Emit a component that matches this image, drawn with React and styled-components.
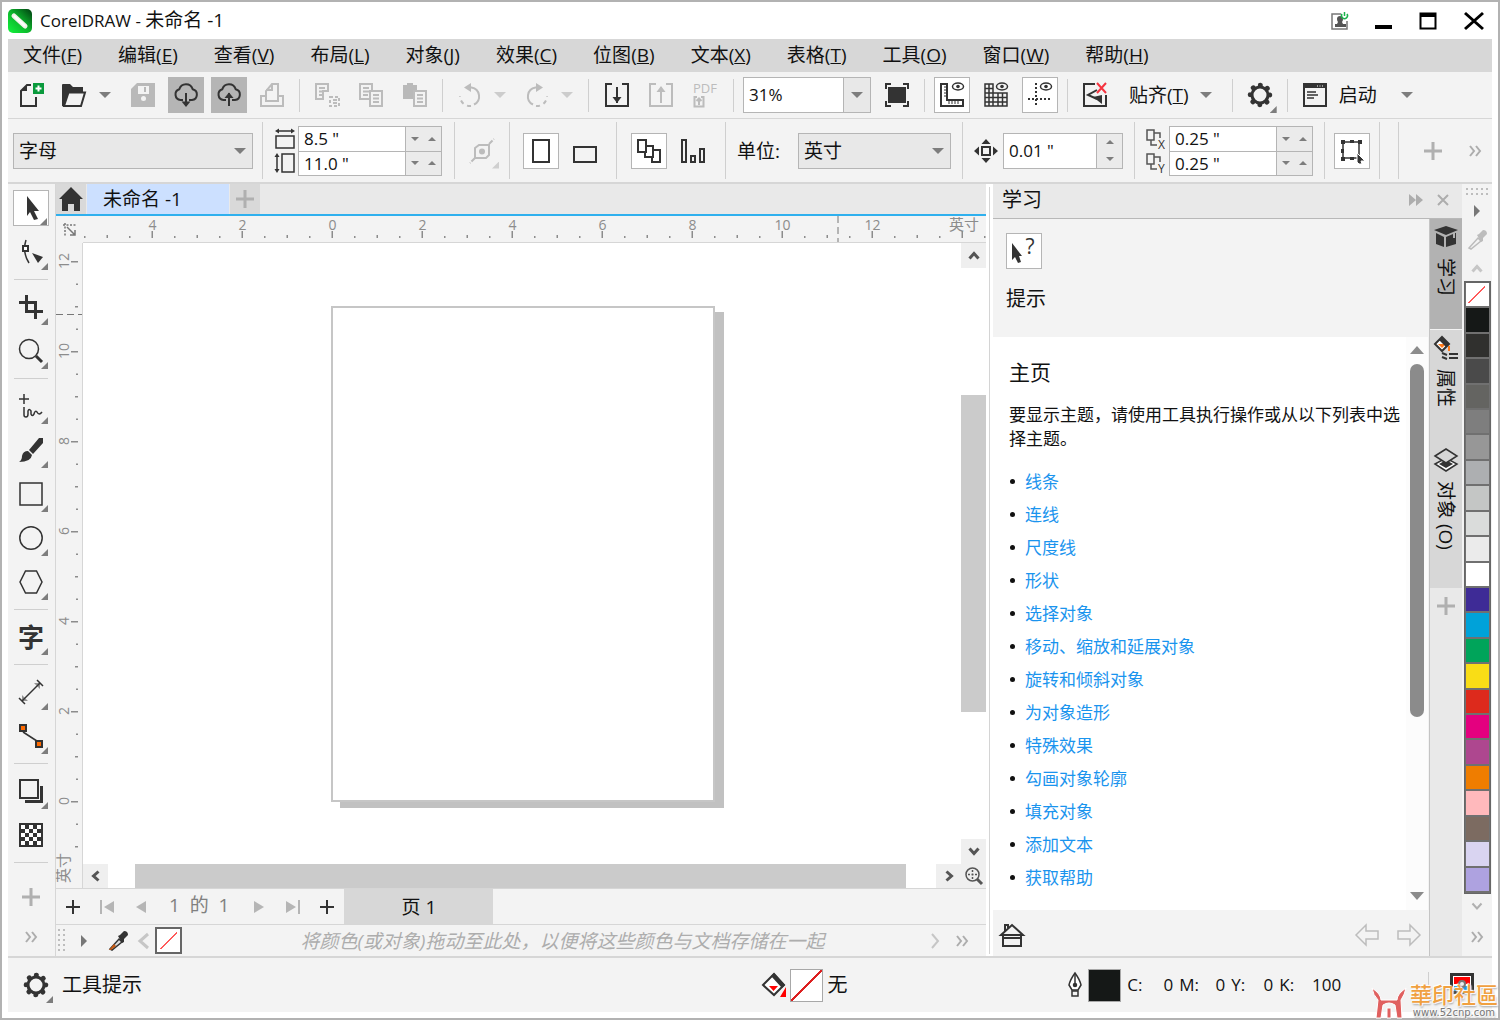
import React from "react";
import styled, { createGlobalStyle, css } from "styled-components";

const INK = "#333";
const FADED = "#bcbcbc";
const LINE = "#d6d6d6";
const PANEL = "#f3f3f3";

const GlobalStyle = createGlobalStyle`
  *, *::before, *::after { box-sizing: border-box; }
  body { margin: 0; background: #fff; }
  body, button, input, select {
    font-family: "Open Sans", "Noto Sans CJK SC", sans-serif;
    font-size: 19px;
    color: #111;
  }
  button { border: 0; padding: 0; margin: 0; background: none; }
  svg { display: block; flex: none; overflow: visible; }
`;

/* ---------- window shell ---------- */

const Window = styled.div`
  display: flex;
  flex-direction: column;
  min-height: 100vh;
  min-width: 1500px;
  padding: 0 6px 6px;
  border: 2px solid #b2b2b2;
  background: #fff;
`;

const TitleBar = styled.header`
  display: flex;
  align-items: center;
  justify-content: space-between;
  height: 37px;
`;

const Title = styled.h1`
  display: flex;
  align-items: center;
  gap: 8px;
  margin: 0;
  font-size: 19px;
  line-height: 24px;
  font-weight: 400;
`;

const Latin = styled.span`
  font-size: 17px;
`;

const WindowButtons = styled.div`
  display: flex;
  align-items: center;
  gap: 25px;
  padding-right: 8px;
`;

const MenuBar = styled.nav`
  display: flex;
  align-items: center;
  gap: 36px;
  height: 33px;
  padding: 0 15px 2px;
  background: #d7d7d7;
`;

const MenuItem = styled.button`
  line-height: 24px;
  white-space: nowrap;
`;

/* ---------- toolbars ---------- */

const Toolbar = styled.div`
  display: flex;
  align-items: center;
  height: ${(p) => p.$height}px;
  padding-left: 5px;
  background: ${PANEL};
  border-bottom: ${(p) => p.$rule}px solid ${LINE};
`;

const Divider = styled.span`
  flex: none;
  width: 1px;
  height: ${(p) => p.$height}px;
  margin: 0 9px;
  background: #cfcfcf;
`;

const Group = styled.div`
  display: flex;
  align-items: center;
  flex: none;
  gap: ${(p) => p.$gap ?? 8}px;
  padding: 0 ${(p) => p.$inset || 0}px;
`;

const Split = styled.div`
  display: flex;
  align-items: center;
`;

const IconButton = styled.button`
  position: relative;
  display: flex;
  align-items: center;
  justify-content: center;
  flex: none;
  width: 36px;
  height: 36px;
  ${(p) => p.$on && css`background: #fff; border: 1px solid #b5b5b5;`}
  ${(p) => p.$pressed && css`background: #b5b5b5;`}
`;

const DropButton = styled.button`
  display: flex;
  align-items: center;
  justify-content: center;
  width: ${(p) => p.$width || 24}px;
  height: 36px;
`;

const TextButton = styled.button`
  display: flex;
  align-items: center;
  line-height: 24px;
  white-space: nowrap;
`;

const Corner = styled.span`
  position: absolute;
  right: 1px;
  bottom: 0;
  width: 7px;
  height: 7px;
  background: ${(p) => (p.$faded ? "#cfcfcf" : "#7d7d7d")};
  clip-path: polygon(100% 0, 100% 100%, 0 100%);
`;

const Picker = styled.span`
  position: relative;
  display: flex;
  flex: none;
  width: ${(p) => p.$width}px;
  height: 36px;
  border: 1px solid #b5b5b5;
  background: ${(p) => (p.$editable ? "#fff" : "#e8e8e8")};
  select {
    flex: 1;
    width: 100%;
    appearance: none;
    border: 0;
    padding: 0 5px;
    background: transparent;
    line-height: 32px;
    font-size: ${(p) => (p.$editable ? 17 : 19)}px;
  }
`;

const PickerArrow = styled.span`
  position: absolute;
  inset: 0 0 0 auto;
  display: flex;
  align-items: center;
  justify-content: center;
  width: ${(p) => (p.$editable ? 27 : 24)}px;
  pointer-events: none;
  ${(p) => p.$editable && css`background: #e8e8e8; border-left: 1px solid #b5b5b5;`}
`;

const FieldStack = styled.div`
  display: flex;
  flex-direction: column;
  border: 1px solid #b5b5b5;
`;

const Field = styled.div`
  display: flex;
  width: ${(p) => p.$width}px;
  height: ${(p) => p.$height}px;
  background: #fff;
  & + & { border-top: 1px solid #b5b5b5; }
  input {
    flex: 1;
    min-width: 0;
    border: 0;
    padding: 0 5px;
    background: transparent;
    font-size: 17px;
  }
`;

const Steppers = styled.span`
  display: flex;
  flex-direction: ${(p) => (p.$vertical ? "column" : "row")};
  align-items: center;
  justify-content: space-around;
  width: ${(p) => (p.$vertical ? 26 : 36)}px;
  background: #ebebeb;
  border-left: 1px solid #b5b5b5;
`;

const IconStack = styled.div`
  display: grid;
  gap: 4px;
`;

const UnitLabel = styled.label`
  display: flex;
  align-items: center;
  gap: 18px;
  line-height: 24px;
  white-space: nowrap;
`;

const Filler = styled.span`
  flex: 1;
`;

/* ---------- workspace ---------- */

const Workspace = styled.main`
  display: grid;
  grid-template-columns: 48px minmax(0, 1fr) 7px 469px 30px;
  flex: 1;
  min-height: 0;
`;

const Toolbox = styled.div`
  display: flex;
  flex-direction: column;
  align-items: center;
  gap: 8px;
  padding: 6px 1px 0 0;
  background: ${PANEL};
  border-right: 1px solid ${LINE};
`;

const ToolRule = styled.span`
  width: 34px;
  height: 1px;
  margin: 1px 0;
  background: #cfcfcf;
`;

const ToolboxTail = styled.div`
  display: grid;
  gap: 4px;
  padding-top: 7px;
`;

const DocumentArea = styled.section`
  display: flex;
  flex-direction: column;
  min-width: 0;
`;

const TabStrip = styled.div`
  display: flex;
  gap: 1px;
  height: 32px;
  background: #e9e9e9;
  border-bottom: 2px solid #2fb0ee;
`;

const StripButton = styled.button`
  display: flex;
  align-items: center;
  justify-content: center;
  width: 30px;
  background: #d9d9d9;
`;

const DocTab = styled.button`
  width: 142px;
  padding-left: 16px;
  text-align: left;
  line-height: 28px;
  background: #cce0ff;
`;

const Stage = styled.div`
  display: grid;
  grid-template-columns: 27px minmax(0, 1fr) 25px;
  grid-template-rows: 27px minmax(0, 1fr) 24px;
  flex: 1;
`;

const RulerCorner = styled.button`
  display: flex;
  align-items: center;
  justify-content: center;
  background: ${PANEL};
`;

const TopRuler = styled.div`
  grid-column: 2 / 4;
  min-width: 0;
  background: ${PANEL};
  border-bottom: 1px solid ${LINE};
`;

const SideRuler = styled.div`
  grid-row: 2 / 4;
  display: flex;
  flex-direction: column;
  justify-content: space-between;
  min-height: 0;
  background: ${PANEL};
  border-right: 1px solid ${LINE};
`;

const Canvas = styled.div`
  position: relative;
  overflow: hidden;
  background: #fff;
`;

const Page = styled.div`
  position: absolute;
  left: 248px;
  top: 63px;
  width: 384px;
  height: 496px;
  background: #fff;
  border: 2px solid #c6c6c6;
  box-shadow: 9px 6px 0 #c1c1c1;
`;

const Scroller = styled.div`
  display: flex;
  flex-direction: ${(p) => (p.$vertical ? "column" : "row")};
  background: #fff;
`;

const ScrollButton = styled.button`
  display: flex;
  align-items: center;
  justify-content: center;
  flex: 0 0 25px;
  min-height: 24px;
  background: #efefef;
`;

const Track = styled.span`
  flex: ${(p) => p.$share};
`;

const Thumb = styled.span`
  flex: ${(p) => p.$share};
  background: #cbcbcb;
`;

const PageBar = styled.div`
  display: flex;
  height: 36px;
  background: ${PANEL};
  border-top: 1px solid ${LINE};
`;

const PageBarButton = styled.button`
  display: flex;
  align-items: center;
  justify-content: center;
  width: 34px;
`;

const PageCount = styled.span`
  padding: 0 13px 0 11px;
  color: #808080;
  line-height: 32px;
  white-space: pre;
`;

const PageTab = styled.button`
  width: 149px;
  background: #d7d7d7;
  line-height: 32px;
`;

const DocPalette = styled.div`
  display: flex;
  align-items: center;
  height: 32px;
  padding: 0 18px 0 2px;
  background: ${PANEL};
  border-top: 1px solid ${LINE};
`;

const Grip = styled.span`
  width: ${(p) => p.$width}px;
  height: ${(p) => p.$height}px;
  background: radial-gradient(circle at 1px 1px, #bdbdbd 1px, transparent 1px) 0 0 / 5px 5px;
`;

const PaletteHint = styled.em`
  flex: 1;
  padding-left: 14px;
  color: #adadad;
  text-align: center;
  line-height: 28px;
  white-space: nowrap;
`;

const NoColor = styled.button`
  width: 27px;
  height: 27px;
  background: linear-gradient(to top left, transparent 48%, #ff5a5a 48%, #ff5a5a 52%, transparent 52%) center / 76% 76% no-repeat #fff;
  border: 2px solid #666;
`;

const Seam = styled.span`
  margin: 3px 3px 2px;
  background: #d4d4d4;
`;

/* ---------- learn docker ---------- */

const Docker = styled.aside`
  display: flex;
  flex-direction: column;
  min-width: 0;
`;

const DockerHeader = styled.div`
  display: flex;
  align-items: center;
  gap: 14px;
  height: 35px;
  padding: 0 13px 2px 9px;
  background: #e9e9e9;
  border-bottom: 1px solid #b8b8b8;
  h2 {
    flex: 1;
    margin: 0;
    font-size: 20px;
    font-weight: 400;
    line-height: 28px;
  }
`;

const DockerBody = styled.div`
  display: grid;
  grid-template-columns: minmax(0, 1fr) 32px;
  flex: 1;
`;

const DockerPage = styled.div`
  display: flex;
  flex-direction: column;
  background: ${PANEL};
  border-right: 1px solid #c4c4c4;
`;

const Hints = styled.div`
  display: flex;
  flex-direction: column;
  gap: 16px;
  height: 118px;
  padding: 14px 13px 0;
  span { font-size: 20px; line-height: 28px; }
`;

const Reader = styled.div`
  display: flex;
  flex: 1;
  margin-right: 1px;
  background: #fff;
`;

const Article = styled.article`
  flex: 1;
  padding: 20px 0 0 16px;
  font-size: 17px;
  line-height: 24px;
  h3 {
    margin: 0 0 16px;
    font-size: 21px;
    font-weight: 400;
    line-height: 30px;
  }
  p { margin: 0 0 14px; }
`;

const Topics = styled.ul`
  margin: 0;
  padding: 0;
  list-style: none;
  li {
    display: flex;
    align-items: center;
    gap: 10px;
    height: 33px;
    padding-left: 1px;
  }
  li::before {
    content: "";
    width: 5px;
    height: 5px;
    border-radius: 50%;
    background: #111;
  }
  a { color: #1a94ee; font-size: 17px; text-decoration: none; }
`;

const ReaderScroll = styled.div`
  display: flex;
  flex-direction: column;
  align-items: center;
  gap: 10px;
  width: 22px;
  padding: 9px 0 10px;
  background: #fcfcfc;
`;

const ReaderThumb = styled.span`
  flex: 360;
  width: 14px;
  border-radius: 7px;
  background: #8b8b8b;
`;

const DockerFooter = styled.div`
  display: flex;
  align-items: center;
  gap: 18px;
  height: 46px;
  padding: 4px 8px 0 7px;
`;

const SideTabs = styled.div`
  display: flex;
  flex-direction: column;
  background: #e9e9e9;
`;

const SideTab = styled.button`
  display: flex;
  flex-direction: column;
  align-items: center;
  gap: 9px;
  min-height: ${(p) => p.$height}px;
  padding-top: 6px;
  background: ${(p) => (p.$active ? "#b2b2b2" : "#d7d7d7")};
  border-bottom: ${(p) => (p.$active ? "1px solid #f3f3f3" : "0")};
  span {
    writing-mode: vertical-rl;
    text-orientation: sideways;
    line-height: 24px;
    white-space: nowrap;
  }
`;

const AddTab = styled.button`
  display: flex;
  justify-content: center;
  padding-top: 9px;
`;

const PaletteColumn = styled.div`
  display: flex;
  flex-direction: column;
  align-items: center;
  background: ${PANEL};
`;

const PaletteButton = styled.button`
  display: flex;
  align-items: center;
  justify-content: center;
  width: 30px;
  height: ${(p) => p.$height}px;
`;

const Swatches = styled.div`
  display: grid;
  grid-auto-rows: 1fr;
  flex: 1;
  width: 27px;
  border: 1px solid #666;
  border-top-width: 2px;
`;

const Swatch = styled.button`
  background: ${(p) => p.$color};
  border: solid #707070;
  border-width: 0 1px 2px 1px;
`;

/* ---------- status bar ---------- */

const StatusBar = styled.footer`
  position: relative;
  display: grid;
  grid-template-columns: 50fr 20fr 29fr;
  align-items: center;
  height: 56px;
  background: ${PANEL};
  border-top: 2px solid ${LINE};
`;

const StatusPart = styled.div`
  display: flex;
  align-items: center;
  gap: ${(p) => p.$gap}px;
  padding-left: ${(p) => p.$indent || 0}px;
  font-size: 20px;
  line-height: 28px;
`;

const ColorChip = styled.button`
  width: 33px;
  height: 33px;
  border: 1px solid #a8a8a8;
  background: ${(p) => p.$fill};
`;

const Ink = styled.span`
  display: flex;
  justify-content: space-between;
  width: ${(p) => p.$width}px;
  font-size: 17px;
`;

const Watermark = styled.div`
  position: absolute;
  right: -6px;
  bottom: -7px;
  display: flex;
  align-items: flex-end;
  gap: 4px;
`;

const WatermarkText = styled.div`
  display: grid;
  justify-items: center;
  text-shadow: 0 0 2px #fff, 1px 1px 1px #fff, -1px -1px 1px #fff, 1px 2px 2px #999;
  strong {
    color: #f0a040;
    font: 500 22px/26px "Open Sans", "Noto Sans CJK TC", sans-serif;
  }
  small {
    color: #777;
    font: 10px/12px "DejaVu Sans", sans-serif;
  }
`;

/* ---------- drawings ---------- */

const Icon = ({ w = 24, h = 24, c = INK, sw = 2, fill = "none", children, ...rest }) => (
  <svg width={w} height={h} viewBox={`0 0 ${w} ${h}`} fill={fill} stroke={c} strokeWidth={sw} aria-hidden="true" {...rest}>
    {children}
  </svg>
);

const Caret = ({ c = "#7d7d7d", up, big }) => {
  const w = big ? 12 : 8;
  const h = big ? 6 : 4;
  return (
    <Icon w={w} h={h} sw={0} fill={c}>
      <path d={up ? `M0 ${h}h${w}L${w / 2} 0z` : `M0 0h${w}L${w / 2} ${h}z`} />
    </Icon>
  );
};

const Plus = ({ c = "#b0b0b0", size = 18, sw = 3 }) => (
  <Icon w={size} h={size} c={c} sw={sw}>
    <path d={`M${size / 2} 0v${size}M0 ${size / 2}h${size}`} />
  </Icon>
);

const Chevrons = ({ c = "#adadad" }) => (
  <Icon w={12} h={12} c={c} sw={2}><path d="M1 1l4 5-4 5M7 1l4 5-4 5" /></Icon>
);

const Chevron = ({ turn = 0, c = "#555", sw = 3 }) => (
  <Icon w={12} h={12} c={c} sw={sw}>
    <path d="M1.500 8.500L6 3.500l4.500 5" transform={`rotate(${turn} 6 6)`} />
  </Icon>
);

const NewIcon = () => (
  <Icon>
    <path d="M12 2H8L2 8v15h15V14" /><path d="M8 2v6H2z" fill={INK} stroke="none" />
    <path d="M14 0h11v11H14z" fill="#0a9a3c" stroke="none" />
    <path d="M19.500 2.500v6M16.500 5.500h6" stroke="#fff" />
  </Icon>
);
const OpenIcon = () => (
  <Icon>
    <path d="M0 2q0-1 1-1h7l3 3h10v6H6L2 23H0z" fill={INK} stroke="none" />
    <path d="M6.500 9.500H23L19 23H2z" fill={PANEL} />
  </Icon>
);
const SaveIcon = () => (
  <Icon c="none" fill="#b9b9b9">
    <path d="M6 0h18v24H0V6z" /><path d="M7 3h11v8H7z" fill={PANEL} /><path d="M13 4h2v5h-2z" />
    <circle cx="12.500" cy="15.500" r="2.500" fill={PANEL} />
  </Icon>
);
const CloudIcon = ({ up }) => (
  <Icon>
    <path d="M9 17H6.500A5.500 5.500 0 0 1 5.300 6.300 7 7 0 0 1 18.700 6.200 5.500 5.500 0 0 1 18 17h-3" />
    <path d="M12 10v13" />
    <path d={up ? "M7.500 15L12 9.500l4.500 5.500z" : "M7.500 18.500L12 24l4.500-5.500z"} fill={INK} stroke="none" />
  </Icon>
);
const PrintIcon = () => (
  <Icon c={FADED}><path d="M5 13H1v10h22V13h-4M6 18V8l6-7h6v17zM12 1v6H6" /></Icon>
);
const CutIcon = () => (
  <Icon c={FADED}>
    <path d="M1 1h12v7H8v8H1zM4 5h6M4 8.500h4M4 12h4" /><path d="M15 14h9v9h-9z" strokeDasharray="3 2" /><path d="M18 17h4M18 20h4" />
  </Icon>
);
const CopyIcon = () => (
  <Icon c={FADED}>
    <path d="M11 16H1V1h12v7M4 5h6M4 8.500h6M4 12h5M11 8h12v15H11zM14 12h6M14 15.500h6M14 19h6" />
  </Icon>
);
const PasteIcon = () => (
  <Icon c={FADED}>
    <path d="M0 2h4V0h6v2h4v6h-4v8H0z" fill="#b9b9b9" stroke="none" />
    <path d="M11 8h12v15H11zM14 12h6M14 15.500h6M14 19h6" />
  </Icon>
);
const UndoIcon = ({ flip }) => (
  <Icon c={FADED}>
    <g transform={flip ? "matrix(-1 0 0 1 24 0)" : undefined}>
      <path d="M10 4.500h3.500a9 9 0 0 1 2.500 17" /><path d="M13 23a10 10 0 0 1-11-10" strokeDasharray="4 4" />
      <path d="M6 4.500L13 0v9z" fill={FADED} stroke="none" />
    </g>
  </Icon>
);
const ImportIcon = ({ up }) => (
  <Icon c={up ? FADED : INK}>
    <path d="M7 1H1v22h22V1h-6M12 4v16" />
    <path d={up ? "M7.500 9L12 3l4.500 6z" : "M7.500 14L12 20l4.500-6z"} fill={up ? FADED : INK} stroke="none" />
  </Icon>
);
const PdfIcon = () => (
  <Icon c={FADED} sw={1}>
    <text x="12" y="10" textAnchor="middle" fontSize="13" fill={FADED} stroke="none">PDF</text>
    <path d="M4 14H1.500v9.500h9V14H8M6 22v-6M3.500 18L6 15.500 8.500 18" strokeWidth="2" />
  </Icon>
);
const FullIcon = () => (
  <Icon>
    <path d="M3 4h18v16H3z" fill={INK} stroke="none" /><path d="M1 6V1h5M18 1h5v5M23 18v5h-5M6 23H1v-5" />
  </Icon>
);
const Eye = ({ x, y }) => (
  <g transform={`translate(${x} ${y})`}>
    <ellipse cx="6" cy="3.500" rx="5.500" ry="3.500" strokeWidth="1.500" /><circle cx="6" cy="3.500" r="1.800" fill={INK} stroke="none" />
  </g>
);
const RulersIcon = () => (
  <Icon sw={2}>
    <path d="M1 1h6v16h16v6H1z" />
    <path d="M4 4h3M4 7h3M4 10h3M4 13h3M9 17v4M12 17v4M15 17v4M18 17v4" strokeWidth="1" /><Eye x={12} y={0} />
  </Icon>
);
const GridIcon = () => (
  <Icon sw={1.500}>
    <path d="M1 1h8v9h14v13H1zM5 1v22M9 9v14M14 10v13M18.500 10v13M1 5.500h8M1 10h9M1 14.500h22M1 19h22" /><Eye x={12} y={0} />
  </Icon>
);
const GuidesIcon = () => (
  <Icon sw={2}><path d="M8 0v24M0 16h24" strokeDasharray="2 2" /><Eye x={12} y={0} /></Icon>
);
const SnapOffIcon = () => (
  <Icon>
    <path d="M12 1H1v22h22V12" /><path d="M14 7L5 12l9 4" /><path d="M10 14l9-2v9z" fill={INK} stroke="none" />
    <path d="M14 0l9 10M23 0l-9 10" stroke="#f5333f" />
  </Icon>
);
const GearIcon = () => (
  <Icon>
    <circle cx="12" cy="12" r="8" strokeWidth="3" />
    <circle cx="12" cy="12" r="9.800" strokeWidth="5" strokeLinecap="round" strokeDasharray="0.100 7.597" />
  </Icon>
);
const LaunchIcon = () => (
  <Icon>
    <path d="M1 1h22v22H1z" /><path d="M1 1h22v4H1z" fill={INK} stroke="none" />
    <path d="M14 3h7" stroke="#fff" strokeWidth="1" strokeDasharray="1 1.500" /><path d="M4 9h9M4 12h11M4 15h7" strokeWidth="1.500" />
  </Icon>
);
const WidthIcon = () => (
  <Icon w={20} h={20}>
    <path d="M1 7h18v12H1z" strokeWidth="1.500" /><path d="M2 2h16" strokeWidth="1.500" /><path d="M0 2l4-2.500v5zM20 2l-4-2.500v5z" fill={INK} stroke="none" />
  </Icon>
);
const HeightIcon = () => (
  <Icon w={20} h={20}>
    <path d="M7 1h12v18H7z" strokeWidth="1.500" /><path d="M2 2v16" strokeWidth="1.500" /><path d="M2 0l-2.500 4h5zM2 20l-2.500-4h5z" fill={INK} stroke="none" />
  </Icon>
);
const DrawableIcon = () => (
  <Icon c={FADED}>
    <path d="M5 9l4-3h10v10l-3 3H5z" /><circle cx="12" cy="12.500" r="3" fill={FADED} stroke="none" />
    <path d="M19 5l5-5M5 19l-5 5" strokeDasharray="5 1.500" />
  </Icon>
);
const PortraitIcon = () => <Icon><path d="M4 1h16v22H4z" /></Icon>;
const LandscapeIcon = () => <Icon><path d="M1 8h22v15H1z" /></Icon>;
const PagesIcon = () => (
  <Icon>
    <path d="M1 1h8v12H1z" /><path d="M9 7h7v11H8v-5" /><path d="M16 11h7v12h-8v-5" />
  </Icon>
);
const PageBarsIcon = () => <Icon><path d="M1 1h4v22H1zM10 17h4v6h-4zM19 10h4v13h-4z" /></Icon>;
const NudgeIcon = () => (
  <Icon>
    <path d="M8 8h8v8H8z" />
    <path d="M12 0l4.500 5h-9zM12 24l4.500-5h-9zM0 12l5-4.500v9zM24 12l-5-4.500v9z" fill={INK} stroke="none" />
  </Icon>
);
const DuplicateIcon = ({ axis }) => (
  <Icon w={20} h={20} c="#555">
    <path d="M1 1h7v10H1zM8 4h6v5M5 11v5h6" strokeWidth="1.500" />
    <text x="12" y="20" fontSize="12" fill="#333" stroke="none">{axis}</text>
  </Icon>
);
const BoundsIcon = () => (
  <Icon>
    <path d="M3 3h16v16H3z" strokeWidth="1.500" />
    <path d="M1 1h4v4H1zM10 1h4v3h-4zM18 1h4v4h-4zM1 10h3v4H1zM1 18h4v4H1zM10 18h4v3h-4z" fill={INK} stroke="none" />
    <path d="M17 14l8 8-4 0 1 3-3 0-2-2z" fill={INK} stroke="#fff" strokeWidth="1" />
  </Icon>
);

const PickIcon = () => <Icon sw={0} fill={INK}><path d="M8 0l12 15h-5l4 8-4 1-4-8-3 4z" /></Icon>;
const ShapeIcon = () => (
  <Icon sw={1.500}>
    <path d="M7 0Q3 12 10 23" /><path d="M4 6h5v5H4z" fill="#fff" strokeWidth="2" /><path d="M13 13l11 4-5 6z" fill={INK} stroke="none" />
  </Icon>
);
const CropIcon = () => <Icon sw={3}><path d="M7.500 0v16.500H24M0 7.500h16.500V24" /></Icon>;
const ZoomIcon = () => <Icon><circle cx="10" cy="10" r="9.500" strokeWidth="1.500" /><path d="M17 17l6 6" strokeWidth="3" /></Icon>;
const FreehandIcon = () => (
  <Icon sw={1.500}><path d="M5 0v10M0 5h10" /><path d="M5 13v8q0 2 2 2t2-3v-3q1-3 3 0v3q1 3 3 0 1-4 3-2 2 4 5 0" /></Icon>
);
const BrushIcon = () => (
  <Icon c="none" fill={INK}><path d="M24 0v5L14 16l-4-4L20 0zM9 13l4 4q-1 7-13 7 3-2 3-6 1-5 6-5z" /></Icon>
);
const RectIcon = () => <Icon><path d="M1 1h22v22H1z" strokeWidth="1.500" /></Icon>;
const EllipseIcon = () => <Icon><circle cx="12" cy="12" r="11.200" strokeWidth="1.500" /></Icon>;
const HexIcon = () => <Icon><path d="M6.500 1h11L23 12l-5.500 11h-11L1 12z" strokeWidth="1.500" /></Icon>;
const TextIcon = () => (
  <Icon c="none" fill={INK}><text x="12" y="22" textAnchor="middle" fontSize="26" fontWeight="700">字</text></Icon>
);
const DimensionIcon = () => (
  <Icon><path d="M3 21L21 3" strokeWidth="1.500" /><path d="M0 18l6 6M18 0l6 6" strokeWidth="1.500" /><path d="M3 21v-6l6 6zM21 3v6l-6-6z" fill={INK} stroke="none" opacity=".5" /></Icon>
);
const ConnectorIcon = () => (
  <Icon sw={2}>
    <path d="M4 8l17 11" strokeWidth="1.500" /><path d="M1 1h6v6H1zM17 17h6v6h-6z" fill="#ff6a00" />
  </Icon>
);
const ShadowIcon = () => <Icon><path d="M1 1h18v18H1z" /><path d="M22.500 7v15.500H6" strokeWidth="3" /></Icon>;
const CheckerIcon = () => (
  <Icon c="none" fill={INK}>
    <path d="M0 0h24v24H0z" />
    {[0, 1, 2, 3, 4].flatMap((r) =>
      [0, 1, 2, 3, 4].filter((c) => (r + c) % 2 === 0).map((c) => (
        <rect key={`${r}${c}`} x={2 + c * 4} y={2 + r * 4} width="4" height="4" fill="#fff" />
      ))
    )}
  </Icon>
);

const Dropper = ({ faded }) => (
  <Icon w={20} h={20} c={faded ? FADED : INK}>
    <path d="M2 18l9-10 3 3-10 8z" strokeWidth="1.500" fill={faded ? "none" : "#ddd"} />
    {!faded && <path d="M1 19l5-6 2 2-5 4z" fill="#c85a12" stroke="none" />}
    <path d="M10 5l2-1 4-4q4 0 4 4l-4 4 0 3-2 1z" fill={faded ? FADED : INK} stroke="none" />
  </Icon>
);

const CapIcon = () => (
  <Icon c="none" fill={INK}>
    <path d="M12 1l12 4-12 5L0 5zM2 8l8 4v10l-8-3zM12 12l7-3v4h2V8h1v11l-10 3z" />
  </Icon>
);
const PropertiesIcon = () => (
  <Icon>
    <path d="M8 1l7 7-7 7-7-7z" fill="#fff" /><path d="M4 8h8l-4 4z" fill="#ff7a1a" stroke="none" /><path d="M8 1l7 7-3 3-7-7z" fill={INK} stroke="none" />
    <path d="M15 10v5" stroke="#ff7a1a" /><path d="M8 17l5 2M8 21l5 2M15 18h9M15 22h9" />
  </Icon>
);
const LayersIcon = () => (
  <Icon sw={1.500}><path d="M1 16l11-6 11 6-11 7z" fill="#fff" /><path d="M5 16l7-4 7 4-7 4z" fill={INK} stroke="none" /><path d="M1 8l11-7 11 7-11 7z" fill="#d7d7d7" /></Icon>
);

const INCH = 45;
const GREY = "#8c8c8c";

/* One ruler: a labelled mark every 2 in, a dash every inch, a dot every half inch. */
function ticks(origin, from, to) {
  const out = [];
  for (let half = from; half <= to; half += 1) {
    out.push({ at: origin + (half * INCH) / 2, value: Math.abs(half / 2), major: half % 4 === 0, inch: half % 2 === 0 });
  }
  return out;
}

function HorizontalRuler() {
  return (
    <svg width="903" height="26" viewBox="0 0 903 26" fill={GREY} fontSize="14" textAnchor="middle">
      {ticks(249.5, -11, 29).map((t) => (
        <g key={t.at}>
          <rect x={t.at - 1} y={t.major ? 15 : t.inch ? 19 : 20} width="1.500" height={t.major ? 7 : t.inch ? 3 : 2} />
          {t.major && t.value < 14 && <text x={t.at} y="14">{t.value}</text>}
        </g>
      ))}
      <text x="881" y="14" fontSize="15">英寸</text>
      <path d="M755 0v26" stroke="#777" strokeDasharray="7 4" />
    </svg>
  );
}

function VerticalRuler() {
  return (
    <>
      <svg width="26" height="560" viewBox="0 0 26 560" fill={GREY} fontSize="14" textAnchor="middle">
        {ticks(18, 0, 26).map((t, i) => (
          <g key={t.at}>
            <rect x={t.major ? 15 : t.inch ? 19 : 20} y={t.at} width={t.major ? 7 : t.inch ? 3 : 2} height="1.500" />
            {t.major && <text transform={`translate(13 ${t.at}) rotate(-90)`}>{12 - i / 2}</text>}
          </g>
        ))}
        <path d="M0 71.500h26" stroke="#777" strokeDasharray="7 4" />
      </svg>
      <svg width="26" height="40" viewBox="0 0 26 40" fill={GREY} fontSize="15" textAnchor="middle">
        <text transform="translate(13 20) rotate(-90)">英寸</text>
      </svg>
    </>
  );
}

/* ---------- data ---------- */

const MENUS = [
  ["文件", "F"], ["编辑", "E"], ["查看", "V"], ["布局", "L"], ["对象", "J"], ["效果", "C"],
  ["位图", "B"], ["文本", "X"], ["表格", "T"], ["工具", "O"], ["窗口", "W"], ["帮助", "H"],
];

const TOOLS = [
  [["选择", PickIcon, true], ["形状", ShapeIcon]],
  [["裁剪", CropIcon], ["缩放", ZoomIcon]],
  [["手绘", FreehandIcon], ["艺术笔", BrushIcon], ["矩形", RectIcon], ["椭圆形", EllipseIcon], ["多边形", HexIcon]],
  [["文本", TextIcon]],
  [["平行度量", DimensionIcon], ["连接器", ConnectorIcon]],
  [["阴影", ShadowIcon], ["透明度", CheckerIcon]],
];

const TOPICS = [
  "线条", "连线", "尺度线", "形状", "选择对象", "移动、缩放和延展对象", "旋转和倾斜对象",
  "为对象造形", "特殊效果", "勾画对象轮廓", "填充对象", "添加文本", "获取帮助",
];

const COLORS = [
  "#151817", "#30302e", "#4a4a4a", "#646461", "#7e7e7e", "#979797", "#adafb1", "#c4c6c5", "#dadcdb",
  "#ebebeb", "#ffffff", "#3e2b96", "#00a2d9", "#00a45a", "#f9dd16", "#dd2a1c", "#e4007f", "#ae478f",
  "#ef7d00", "#ffb9bc", "#7c6b61", "#d9d4f1", "#aea2e0",
];

const NumberRow = ({ label, value, width = 142, height = 24, vertical }) => (
  <Field $width={width} $height={height}>
    <input aria-label={label} defaultValue={value} />
    <Steppers $vertical={vertical}>
      {vertical ? <><Caret up /><Caret /></> : <><Caret /><Caret up /></>}
    </Steppers>
  </Field>
);

/* ---------- sections ---------- */

function StandardBar() {
  const rule = <Divider $height={33} />;
  return (
    <Toolbar $height={47} $rule={1}>
      <Group $gap={7}>
        <IconButton aria-label="新建"><NewIcon /></IconButton>
        <Split>
          <IconButton aria-label="打开"><OpenIcon /></IconButton>
          <DropButton aria-label="最近打开" $width={26}><Caret big /></DropButton>
        </Split>
        <IconButton aria-label="保存"><SaveIcon /></IconButton>
        <IconButton aria-label="下载" $pressed><CloudIcon /></IconButton>
        <IconButton aria-label="上传" $pressed><CloudIcon up /></IconButton>
        <IconButton aria-label="打印"><PrintIcon /></IconButton>
      </Group>
      {rule}
      <Group>
        <IconButton aria-label="剪切"><CutIcon /></IconButton>
        <IconButton aria-label="复制"><CopyIcon /></IconButton>
        <IconButton aria-label="粘贴"><PasteIcon /></IconButton>
      </Group>
      {rule}
      <Group $gap={7}>
        <Split>
          <IconButton aria-label="撤消"><UndoIcon /></IconButton>
          <DropButton aria-label="撤消列表"><Caret big c="#cccccc" /></DropButton>
        </Split>
        <Split>
          <IconButton aria-label="重做"><UndoIcon flip /></IconButton>
          <DropButton aria-label="重做列表"><Caret big c="#cccccc" /></DropButton>
        </Split>
      </Group>
      {rule}
      <Group $inset={1}>
        <IconButton aria-label="导入"><ImportIcon /></IconButton>
        <IconButton aria-label="导出"><ImportIcon up /></IconButton>
        <IconButton aria-label="发布为 PDF"><PdfIcon /></IconButton>
      </Group>
      {rule}
      <Group>
        <Picker $width={128} $editable>
          <select aria-label="缩放级别" defaultValue="31%"><option>31%</option></select>
          <PickerArrow $editable><Caret big /></PickerArrow>
        </Picker>
        <IconButton aria-label="全屏预览"><FullIcon /></IconButton>
      </Group>
      {rule}
      <Group>
        <IconButton aria-label="显示标尺" $on><RulersIcon /></IconButton>
        <IconButton aria-label="显示网格"><GridIcon /></IconButton>
        <IconButton aria-label="显示辅助线" $on><GuidesIcon /></IconButton>
      </Group>
      {rule}
      <Group $gap={16}>
        <IconButton aria-label="关闭贴齐"><SnapOffIcon /></IconButton>
        <Split>
          <TextButton>贴齐(<u>T</u>)</TextButton>
          <DropButton aria-label="贴齐选项" $width={34}><Caret big /></DropButton>
        </Split>
      </Group>
      {rule}
      <IconButton aria-label="选项"><GearIcon /><Corner /></IconButton>
      {rule}
      <Group $gap={6}>
        <IconButton aria-label="启动器"><LaunchIcon /></IconButton>
        <Split>
          <TextButton>启动</TextButton>
          <DropButton aria-label="启动选项" $width={60}><Caret big /></DropButton>
        </Split>
      </Group>
    </Toolbar>
  );
}

function PropertyBar() {
  const rule = <Divider $height={57} />;
  return (
    <Toolbar $height={65} $rule={2}>
      <Picker $width={240}>
        <select aria-label="页面大小" defaultValue="字母"><option>字母</option></select>
        <PickerArrow><Caret big /></PickerArrow>
      </Picker>
      {rule}
      <Group $gap={3} $inset={3}>
        <IconStack><WidthIcon /><HeightIcon /></IconStack>
        <FieldStack>
          <NumberRow label="页面宽度" value={'8.5 "'} />
          <NumberRow label="页面高度" value={'11.0 "'} />
        </FieldStack>
      </Group>
      {rule}
      <IconButton aria-label="可绘制页面"><DrawableIcon /><Corner $faded /></IconButton>
      {rule}
      <Group $inset={4}>
        <IconButton aria-label="纵向" $on><PortraitIcon /></IconButton>
        <IconButton aria-label="横向"><LandscapeIcon /></IconButton>
      </Group>
      {rule}
      <Group $inset={5}>
        <IconButton aria-label="所有页面" $on><PagesIcon /></IconButton>
        <IconButton aria-label="当前页面"><PageBarsIcon /></IconButton>
      </Group>
      {rule}
      <Group $inset={2}>
        <UnitLabel>
          单位:
          <Picker $width={153}>
            <select defaultValue="英寸"><option>英寸</option></select>
            <PickerArrow><Caret big /></PickerArrow>
          </Picker>
        </UnitLabel>
      </Group>
      {rule}
      <Group $gap={5} $inset={2}>
        <NudgeIcon />
        <FieldStack><NumberRow label="微调距离" value={'0.01 "'} width={118} height={34} vertical /></FieldStack>
      </Group>
      {rule}
      <Group $gap={3} $inset={2}>
        <IconStack><DuplicateIcon axis="X" /><DuplicateIcon axis="Y" /></IconStack>
        <FieldStack>
          <NumberRow label="再制距离 X" value={'0.25 "'} />
          <NumberRow label="再制距离 Y" value={'0.25 "'} />
        </FieldStack>
      </Group>
      {rule}
      <IconButton aria-label="将对象视为已填充" $on><BoundsIcon /></IconButton>
      {rule}
      {rule}
      <Filler />
      <Group $gap={27} $inset={11}>
        <TextButton aria-label="自定义"><Plus /></TextButton>
        <TextButton aria-label="更多"><Chevrons /></TextButton>
      </Group>
    </Toolbar>
  );
}

function ToolboxPanel() {
  return (
    <Toolbox>
      {TOOLS.map((set, i) => (
        <React.Fragment key={i}>
          {set.map(([name, Drawing, on]) => (
            <IconButton key={name} aria-label={name} $on={on}>
              <Drawing />
              {name !== "透明度" && <Corner />}
            </IconButton>
          ))}
          <ToolRule />
        </React.Fragment>
      ))}
      <ToolboxTail>
        <IconButton aria-label="添加工具"><Plus /></IconButton>
        <IconButton aria-label="更多工具"><Chevrons /></IconButton>
      </ToolboxTail>
    </Toolbox>
  );
}

function DocumentPanel() {
  return (
    <DocumentArea>
      <TabStrip>
        <StripButton aria-label="欢迎屏幕">
          <Icon c="none" fill={INK}><path d="M12 0L24 12h-3v12h-6v-7H9v7H3V12H0z" /></Icon>
        </StripButton>
        <DocTab>未命名 -1</DocTab>
        <StripButton aria-label="新建文档"><Plus /></StripButton>
      </TabStrip>
      <Stage>
        <RulerCorner aria-label="标尺原点">
          <Icon w={14} h={14} c="#777" sw={1.500}>
            <path d="M0 2h14M2 0v14" strokeDasharray="2 1.500" /><path d="M4 4l8 8M12 7v5H7" />
          </Icon>
        </RulerCorner>
        <TopRuler><HorizontalRuler /></TopRuler>
        <SideRuler><VerticalRuler /></SideRuler>
        <Canvas><Page /></Canvas>
        <Scroller $vertical>
          <ScrollButton aria-label="向上滚动"><Chevron /></ScrollButton>
          <Track $share={127} /><Thumb $share={316} /><Track $share={127} />
          <ScrollButton aria-label="向下滚动"><Chevron turn={180} /></ScrollButton>
        </Scroller>
        <Scroller>
          <ScrollButton aria-label="向左滚动"><Chevron turn={-90} /></ScrollButton>
          <Track $share={27} /><Thumb $share={771} /><Track $share={30} />
          <ScrollButton aria-label="向右滚动"><Chevron turn={90} /></ScrollButton>
        </Scroller>
        <ScrollButton aria-label="导航器">
          <Icon w={18} h={18} c="#555" sw={1.500}>
            <circle cx="7.500" cy="7.500" r="6.500" /><path d="M12 12l5 5" strokeWidth="3" /><path d="M7.500 3v9M3 7.500h9" strokeDasharray="2 1.500" />
          </Icon>
        </ScrollButton>
      </Stage>
      <PageBar>
        <PageBarButton aria-label="在前面添加页"><Plus c={INK} size={14} sw={2} /></PageBarButton>
        <PageBarButton aria-label="首页"><Icon w={14} h={14} c="none" fill="#b5b5b5"><path d="M0 0h2v14H0zM14 1v12L4 7z" /></Icon></PageBarButton>
        <PageBarButton aria-label="上一页"><Icon w={10} h={12} c="none" fill="#b5b5b5"><path d="M10 0v12L0 6z" /></Icon></PageBarButton>
        <PageCount>1  的  1</PageCount>
        <PageBarButton aria-label="下一页"><Icon w={10} h={12} c="none" fill="#b5b5b5"><path d="M0 0v12l10-6z" /></Icon></PageBarButton>
        <PageBarButton aria-label="末页"><Icon w={14} h={14} c="none" fill="#b5b5b5"><path d="M12 0h2v14h-2zM0 1v12l10-6z" /></Icon></PageBarButton>
        <PageBarButton aria-label="在后面添加页"><Plus c={INK} size={14} sw={2} /></PageBarButton>
        <PageTab>页 1</PageTab>
      </PageBar>
      <DocPalette>
        <Grip $width={9} $height={23} />
        <PageBarButton aria-label="调色板选项"><Icon w={6} h={12} c="none" fill="#777"><path d="M0 0v12l6-6z" /></Icon></PageBarButton>
        <PageBarButton aria-label="颜色滴管"><Dropper /></PageBarButton>
        <Icon w={20} h={16} c="#c6c6c6" sw={3}><path d="M13 1L5 8l8 7" /></Icon>
        <NoColor aria-label="无颜色" />
        <PaletteHint>将颜色(或对象)拖动至此处，以便将这些颜色与文档存储在一起</PaletteHint>
        <Group $gap={15}>
          <Icon w={12} h={14} c="#c6c6c6"><path d="M3 0l6 7-6 7" /></Icon>
          <Chevrons />
        </Group>
      </DocPalette>
    </DocumentArea>
  );
}

function LearnDocker() {
  return (
    <Docker>
      <DockerHeader>
        <h2>学习</h2>
        <TextButton aria-label="折叠"><Icon w={14} h={12} c="none" fill="#adadad"><path d="M0 0l7 6-7 6zM7 0l7 6-7 6z" /></Icon></TextButton>
        <TextButton aria-label="关闭"><Icon w={12} h={12} c="#adadad"><path d="M1 1l10 10M11 1L1 11" /></Icon></TextButton>
      </DockerHeader>
      <DockerBody>
        <DockerPage>
          <Hints>
            <IconButton aria-label="提示" $on>
              <Icon>
                <path d="M0 4l10 13H7l2 6-3 1-3-6-3 3z" fill={INK} stroke="none" />
                <text x="18" y="15" textAnchor="middle" fontSize="21" fill={INK} stroke="none">?</text>
              </Icon>
            </IconButton>
            <span>提示</span>
          </Hints>
          <Reader>
            <Article>
              <h3>主页</h3>
              <p>要显示主题，请使用工具执行操作或从以下列表中选择主题。</p>
              <Topics>
                {TOPICS.map((t) => <li key={t}><a href="#topic">{t}</a></li>)}
              </Topics>
            </Article>
            <ReaderScroll>
              <Icon w={14} h={8} c="none" fill="#8b8b8b"><path d="M0 8h14L7 0z" /></Icon>
              <ReaderThumb />
              <Track $share={158} />
              <Icon w={14} h={8} c="none" fill="#8b8b8b"><path d="M0 0h14L7 8z" /></Icon>
            </ReaderScroll>
          </Reader>
          <DockerFooter>
            <TextButton aria-label="主页"><Icon><path d="M3 11v12h18V11M3 15h18M1 12L12 2l11 10zM5 8V2h3v3" /></Icon></TextButton>
            <Filler />
            <TextButton aria-label="后退"><Icon c="#bdbdbd" sw={1.500}><path d="M1 12L11 2v6h12v8H11v6z" /></Icon></TextButton>
            <TextButton aria-label="前进"><Icon c="#bdbdbd" sw={1.500}><path d="M23 12L13 2v6H1v8h12v6z" /></Icon></TextButton>
          </DockerFooter>
        </DockerPage>
        <SideTabs>
          <SideTab $active $height={111}><CapIcon /><span>学习</span></SideTab>
          <SideTab $height={112}><PropertiesIcon /><span>属性</span></SideTab>
          <SideTab $height={146}><LayersIcon /><span>对象 (O)</span></SideTab>
          <AddTab aria-label="添加泊坞窗"><Plus /></AddTab>
        </SideTabs>
      </DockerBody>
    </Docker>
  );
}

function ColorColumn() {
  return (
    <PaletteColumn>
      <PaletteButton as="span" $height={15}><Grip $width={23} $height={8} /></PaletteButton>
      <PaletteButton aria-label="调色板选项" $height={24}><Icon w={6} h={12} c="none" fill="#777"><path d="M0 0v12l6-6z" /></Icon></PaletteButton>
      <PaletteButton aria-label="颜色滴管" $height={34}><Dropper faded /></PaletteButton>
      <PaletteButton aria-label="向上" $height={24}><Chevron c="#c6c6c6" /></PaletteButton>
      <Swatches>
        <Swatch aria-label="无颜色" $color="linear-gradient(to top left, transparent 48%, #ff5a5a 48%, #ff5a5a 52%, transparent 52%) center / 76% 76% no-repeat #fff" />
        {COLORS.map((c) => <Swatch key={c} aria-label={c} $color={c} />)}
      </Swatches>
      <PaletteButton aria-label="向下" $height={24}><Chevron turn={180} c="#b0b0b0" sw={2} /></PaletteButton>
      <PaletteButton aria-label="更多颜色" $height={38}><Chevrons /></PaletteButton>
    </PaletteColumn>
  );
}

function Status() {
  return (
    <StatusBar>
      <StatusPart $gap={8} $indent={10}>
        <IconButton aria-label="状态栏选项"><GearIcon /><Corner /></IconButton>
        <span>工具提示</span>
      </StatusPart>
      <StatusPart $gap={4} $indent={5}>
        <Icon>
          <path d="M12 1l10 11-10 10L1 12z" fill="#fff" /><path d="M12 0l11 12-3 3L9 3z" fill={INK} stroke="none" />
          <path d="M7 13h9l-4.500 5zM24 14v10h-6z" fill="#f00" stroke="none" />
        </Icon>
        <ColorChip aria-label="填充" $fill="linear-gradient(to top left, transparent 47%, #dc2020 47%, #dc2020 53%, transparent 53%) #fff" />
        <span>无</span>
      </StatusPart>
      <StatusPart $gap={6} $indent={11}>
        <Icon w={14} h={24} sw={1.500}>
          <path d="M7 0Q12 7 13 12l-3 5H4l-3-5Q2 7 7 0z" fill="#fff" /><path d="M4 18h6v5H4zM7 0v12" /><circle cx="7" cy="12" r="1.500" fill={INK} />
        </Icon>
        <ColorChip aria-label="轮廓" $fill="#151817" />
        <Ink $width={46}><span>C:</span><span>0</span></Ink>
        <Ink $width={46}><span>M:</span><span>0</span></Ink>
        <Ink $width={42}><span>Y:</span><span>0</span></Ink>
        <Ink $width={62}><span>K:</span><span>100</span></Ink>
        <Filler />
        <Divider $height={26} />
        <IconButton aria-label="颜色校样">
          <Icon sw={3}>
            <path d="M1.500 1.500h21v18h-21z" fill="#fff" /><path d="M4 4h16v7H4z" fill="#f00" stroke="none" /><path d="M4 13h16v5H4z" fill="#1597e5" stroke="none" />
            <circle cx="12" cy="11" r="3" stroke="#777" strokeWidth="2" fill="#eee" />
          </Icon>
        </IconButton>
        <span /><span />
      </StatusPart>
      <Watermark>
        <Icon w={34} h={32} c="#fff" sw={1} fill="#e0605f">
          <path d="M0 1q9 6 9 12h16q0-6 9-12-1 6-5 12l1 18h-5l-2-13q-6-4-12 0L9 31H4l2-18Q1 8 0 1zM15 21h4v10h-4z" />
        </Icon>
        <WatermarkText><strong>華印社區</strong><small>www.52cnp.com</small></WatermarkText>
      </Watermark>
    </StatusBar>
  );
}

export default function App() {
  return (
    <Window>
      <GlobalStyle />
      <TitleBar>
        <Title>
          <Icon c="none" sw={0}>
            <defs>
              <linearGradient id="logo" x1="1" y1="0" x2="0" y2="1">
                <stop offset="0" stopColor="#003c10" /><stop offset=".5" stopColor="#0db52c" /><stop offset="1" stopColor="#12f53c" />
              </linearGradient>
            </defs>
            <rect width="24" height="24" rx="5" fill="url(#logo)" />
            <path d="M6 7l11 10" stroke="#f2f2e8" strokeWidth="5" strokeLinecap="round" /><path d="M6 7l11 10" stroke="#fff" strokeWidth="2" />
          </Icon>
          <span><Latin>CorelDRAW - </Latin>未命名 -1</span>
        </Title>
        <WindowButtons>
          <TextButton aria-label="登录">
            <Icon w={18} h={18} c="#777" sw={1.500}>
              <path d="M10 2H1v15h15V9" /><path d="M9 4q3 0 3 3 0 2-1 3l1 2h3v3H4v-3h2l1-2Q6 9 6 7q0-3 3-3z" fill="#555" stroke="none" />
              <path d="M11 2a3 3 0 1 0 5 0M13.500 0v4" stroke="#1bb34c" />
            </Icon>
          </TextButton>
          <Group $gap={27}>
            <TextButton aria-label="最小化"><Icon w={18} h={18} c="#000" sw={4}><path d="M1 15h17" /></Icon></TextButton>
            <TextButton aria-label="最大化"><Icon w={18} h={18} c="#000"><path d="M1.500 1.500h15v15h-15z" /><path d="M1 3h16" strokeWidth="4" /></Icon></TextButton>
            <TextButton aria-label="关闭"><Icon w={20} h={18} c="#000" sw={3}><path d="M1 1l18 16M19 1L1 17" /></Icon></TextButton>
          </Group>
        </WindowButtons>
      </TitleBar>
      <MenuBar>
        {MENUS.map(([name, key]) => (
          <MenuItem key={key}>{name}(<u>{key}</u>)</MenuItem>
        ))}
      </MenuBar>
      <StandardBar />
      <PropertyBar />
      <Workspace>
        <ToolboxPanel />
        <DocumentPanel />
        <Seam />
        <LearnDocker />
        <ColorColumn />
      </Workspace>
      <Status />
    </Window>
  );
}
